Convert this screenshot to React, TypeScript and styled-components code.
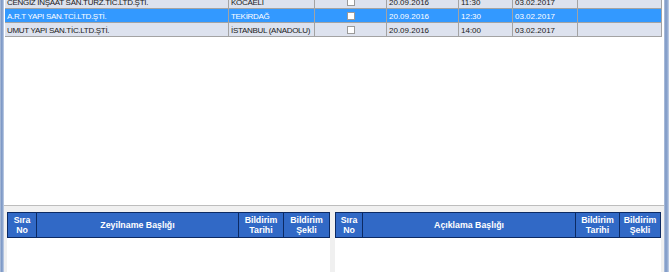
import React from "react";
import styled, { createGlobalStyle } from "styled-components";

const Global = createGlobalStyle`
  html, body { margin: 0; padding: 0; background: #f0f0f0; }
  body { font-family: "Liberation Sans", Arial, sans-serif; }
  #root { width: 669px; height: 272px; overflow: hidden; }
`;

const Window = styled.div`
  display: flex;
  width: 669px;
  height: 272px;
  overflow: hidden;
`;

const Frame = styled.div<{ $w: number }>`
  flex: 0 0 ${(p) => p.$w}px;
  background: linear-gradient(to right, #b7c6de 0%, #7e99c6 35%, #8ea7cf 65%, #c8d4e8 100%);
`;

const Content = styled.div`
  flex: 1;
  display: flex;
  flex-direction: column;
  min-width: 0;
`;

const TopGrid = styled.div`
  flex: 0 0 205px;
  background: #ffffff;
  overflow: hidden;
  padding: 0 2px 0 1px;
  box-sizing: border-box;
`;

const Rows = styled.div`
  margin-top: -5px;
`;

const Row = styled.div<{ $sel?: boolean }>`
  display: grid;
  grid-template-columns: 224px 86px 72px 72px 54px 65px 84px;
  height: 14px;
  box-sizing: border-box;
  border-bottom: 1px solid #a3a3a3;
  background: ${(p) => (p.$sel ? "#3399ff" : "#dde2ee")};
  color: ${(p) => (p.$sel ? "#ffffff" : "#1a1a1a")};
  font-size: 8px;
  line-height: 13px;
`;

const Cell = styled.div<{ $center?: boolean; $tight?: boolean }>`
  border-right: 1px solid #a3a3a3;
  padding: 1px 0 0 2px;
  box-sizing: border-box;
  white-space: nowrap;
  overflow: hidden;
  display: flex;
  align-items: center;
  letter-spacing: ${(p) => (p.$tight ? "-0.3px" : "0")};
  justify-content: ${(p) => (p.$center ? "center" : "flex-start")};
`;

const Check = styled.span`
  display: block;
  width: 8px;
  height: 8px;
  box-sizing: border-box;
  background: #ffffff;
  border: 1px solid #9a9a9a;
  margin: -1px 0 0 -2px;
`;

const Splitter = styled.div`
  flex: 0 0 7px;
  box-sizing: border-box;
  border-top: 1px solid #bdbdbd;
  background: #f0f0f0;
`;

const Bottom = styled.div`
  flex: 1;
  display: flex;
  gap: 5px;
  padding: 0 3px 0 3px;
  background: #f0f0f0;
`;

const Panel = styled.div<{ $w: number }>`
  flex: 0 0 ${(p) => p.$w}px;
  background: #ffffff;
  display: flex;
  flex-direction: column;
`;

const Header = styled.div<{ $cols: string }>`
  display: grid;
  grid-template-columns: ${(p) => p.$cols};
  height: 26px;
  box-sizing: border-box;
  border: 1px solid #0c2a63;
  background: #3169c6;
`;

const HCell = styled.div`
  display: flex;
  align-items: center;
  justify-content: center;
  text-align: center;
  color: #ffffff;
  font-weight: bold;
  font-size: 8.8px;
  line-height: 10px;
  border-right: 1px solid #0c2a63;
  &:last-child { border-right: none; }
`;

const rows = [
  { firm: "CENGİZ İNŞAAT SAN.TURZ.TİC.LTD.ŞTİ.", city: "KOCAELİ", date: "20.09.2016", time: "11:30", end: "03.02.2017" },
  { firm: "A.R.T YAPI SAN.TCİ.LTD.ŞTİ.", city: "TEKİRDAĞ", date: "20.09.2016", time: "12:30", end: "03.02.2017", sel: true },
  { firm: "UMUT YAPI SAN.TİC.LTD.ŞTİ.", city: "İSTANBUL (ANADOLU)", date: "20.09.2016", time: "14:00", end: "03.02.2017" },
];

export default function App() {
  return (
    <>
      <Global />
      <Window>
        <Frame $w={4} />
        <Content>
          <TopGrid>
            <Rows>
              {rows.map((r, i) => (
                <Row key={i} $sel={r.sel}>
                  <Cell $tight>{r.firm}</Cell>
                  <Cell $tight>{r.city}</Cell>
                  <Cell $center>
                    <Check />
                  </Cell>
                  <Cell>{r.date}</Cell>
                  <Cell>{r.time}</Cell>
                  <Cell>{r.end}</Cell>
                  <Cell />
                </Row>
              ))}
            </Rows>
          </TopGrid>
          <Splitter />
          <Bottom>
            <Panel $w={323}>
              <Header $cols="29px 202px 45px 1fr">
                <HCell>Sıra<br />No</HCell>
                <HCell>Zeyilname Başlığı</HCell>
                <HCell>Bildirim<br />Tarihi</HCell>
                <HCell>Bildirim<br />Şekli</HCell>
              </Header>
            </Panel>
            <Panel $w={326}>
              <Header $cols="27px 213px 44px 1fr">
                <HCell>Sıra<br />No</HCell>
                <HCell>Açıklama Başlığı</HCell>
                <HCell>Bildirim<br />Tarihi</HCell>
                <HCell>Bildirim<br />Şekli</HCell>
              </Header>
            </Panel>
          </Bottom>
        </Content>
        <Frame $w={5} />
      </Window>
    </>
  );
}
